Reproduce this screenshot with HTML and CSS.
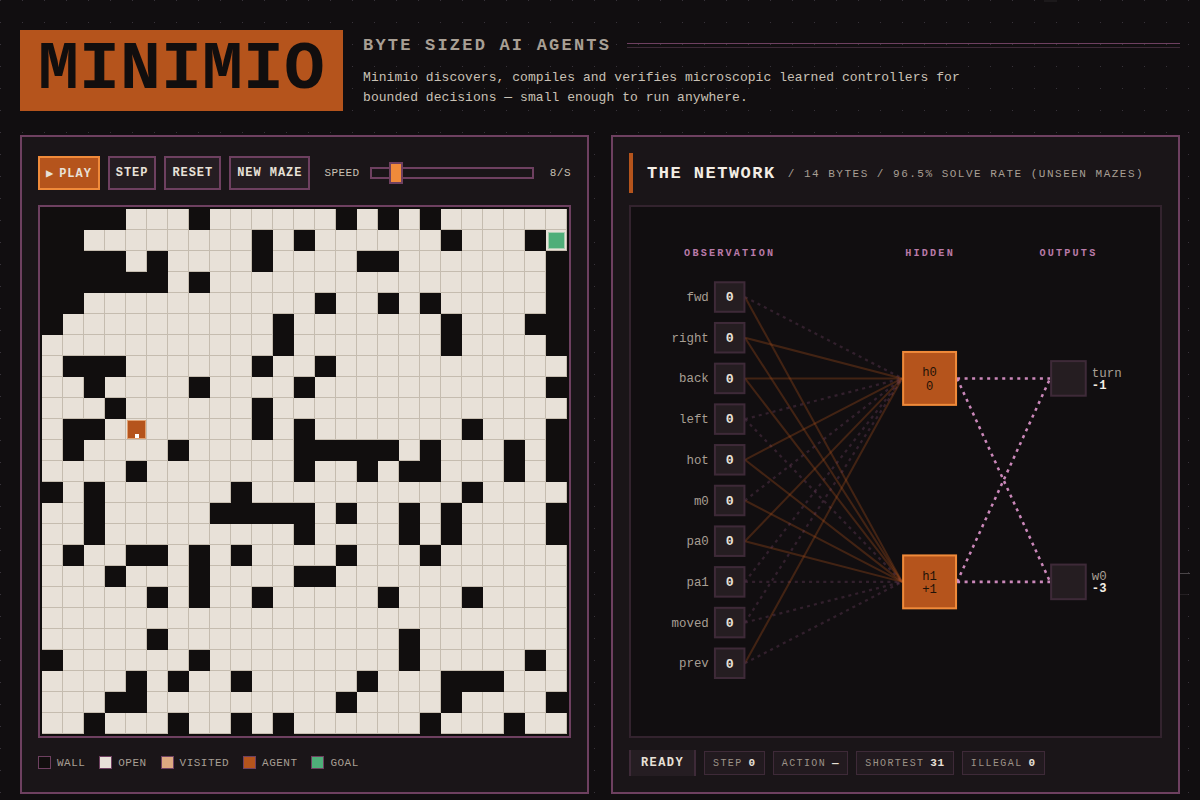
FILE: index.html
```html
<!DOCTYPE html>
<html lang="en">
<head>
    <meta charset="UTF-8">
    <meta name="viewport" content="width=device-width, initial-scale=1.0">
    <title>Minimio</title>
    <link rel="stylesheet" href="styles.css">
</head>
<body>

    <header class="masthead">
        <h1 class="logo">MINIMIO</h1>
        <div class="intro">
            <div class="tagline-row">
                <h2 class="tagline">BYTE SIZED AI AGENTS</h2>
                <div class="tagline-rule"></div>
            </div>
            <p class="blurb">Minimio discovers, compiles and verifies microscopic learned controllers for<br>bounded decisions — small enough to run anywhere.</p>
        </div>
    </header>

    <main class="panels">
        <!-- maze -->
        <section class="panel">
            <div class="controls">
                <button class="btn btn-play"><span class="play-icon">▶</span>PLAY</button>
                <button class="btn">STEP</button>
                <button class="btn">RESET</button>
                <button class="btn">NEW MAZE</button>
                <label class="speed-label" for="speed">SPEED</label>
                <input class="speed" id="speed" type="range" min="1" max="60" value="8">
                <span class="speed-value">8/S</span>
            </div>
            <div class="maze" id="maze"></div>
            <div class="legend">
                <span class="legend-item"><i class="swatch swatch-wall"></i>WALL</span>
                <span class="legend-item"><i class="swatch swatch-open"></i>OPEN</span>
                <span class="legend-item"><i class="swatch swatch-visited"></i>VISITED</span>
                <span class="legend-item"><i class="swatch swatch-agent"></i>AGENT</span>
                <span class="legend-item"><i class="swatch swatch-goal"></i>GOAL</span>
            </div>
        </section>

        <!-- network -->
        <section class="panel">
            <div class="net-head">
                <h2 class="net-title">THE NETWORK</h2>
                <span class="net-sub">/ 14 BYTES / 96.5% SOLVE RATE (UNSEEN MAZES)</span>
            </div>
            <div class="net-box">
                <svg class="net" id="net" viewBox="0 0 520 520"></svg>
            </div>
            <div class="status">
                <span class="ready">READY</span>
                <span class="chip">STEP <b>0</b></span>
                <span class="chip">ACTION <b>—</b></span>
                <span class="chip">SHORTEST <b>31</b></span>
                <span class="chip">ILLEGAL <b>0</b></span>
            </div>
        </section>
    </main>

    <div class="edge-mark edge-mark-a"></div>
    <div class="edge-mark edge-mark-b"></div>
    <div class="edge-mark edge-mark-c"></div>

    <script src="script.js"></script>
</body>
</html>
```

FILE: styles.css
```css
* {
    box-sizing: border-box;
}
body {
    margin: 0;
    padding: 30px 20px 0;
    height: 800px;
    overflow: hidden;
    font-family: "Liberation Mono", monospace;
    color: #e8e1d8;
    background-color: #110e10;
    background-image: radial-gradient(circle at 0.5px 0.5px, #38333a 0.8px, transparent 0.8px);
    background-size: 22px 22px;
}

/* header */
.masthead {
    display: flex;
    gap: 20px;
    height: 81px;
    margin-bottom: 24px;
}
.logo {
    margin: 0;
    padding: 0 18px;
    height: 81px;
    font-size: 68px;
    line-height: 79px;
    letter-spacing: 0.2px;
    font-weight: 700;
    color: #110e0e;
    background-color: #b5541c;
}
.intro {
    flex: 1;
}
.tagline-row {
    display: flex;
    align-items: center;
    gap: 16px;
    height: 30px;
}
.tagline {
    margin: 0;
    font-size: 17px;
    letter-spacing: 2.2px;
    font-weight: 700;
    color: #a89f94;
}
.tagline-rule {
    flex: 1;
    height: 5px;
    border-top: 1px solid #6e4060;
    border-bottom: 1px solid #3e2a38;
}
.blurb {
    margin: 8px 0 0;
    font-size: 13px;
    letter-spacing: 0.05px;
    line-height: 20px;
    color: #c9c1b5;
}

/* panels */
.panels {
    display: grid;
    grid-template-columns: 1fr 1fr;
    gap: 22px;
    height: 659px;
}
.panel {
    padding: 16px;
    background-color: #1a1518;
    border: 2px solid #6e4060;
}

/* controls */
.controls {
    display: flex;
    align-items: center;
    height: 40px;
    margin-bottom: 12px;
}
.btn {
    height: 34px;
    margin-right: 8px;
    padding: 0 6px;
    font-family: inherit;
    font-size: 12px;
    font-weight: 700;
    letter-spacing: 0.95px;
    color: #e8e1d8;
    background-color: #251d22;
    border: 2px solid #6e4060;
}
.btn-play {
    background-color: #b5541c;
    border-color: #f08a3a;
}
.play-icon {
    margin-right: 5px;
}
.speed-label {
    margin-left: 6px;
    margin-right: 10px;
    font-size: 11px;
    letter-spacing: 0.45px;
    color: #c9c1b5;
}
.speed {
    flex: 1;
    min-width: 0;
    height: 22px;
    margin: 0 16px 0 0;
    background: transparent;
    appearance: none;
    -webkit-appearance: none;
}
.speed::-webkit-slider-runnable-track {
    height: 12px;
    background-color: #1a1518;
    border: 2px solid #6e4060;
}
.speed::-webkit-slider-thumb {
    -webkit-appearance: none;
    width: 14px;
    height: 22px;
    margin-top: -7px;
    background-color: #f08a3a;
    border: 2px solid #6e4060;
}
.speed-value {
    font-size: 11px;
    letter-spacing: 0.5px;
    color: #c9c1b5;
}

/* maze */
.maze {
    display: grid;
    grid-template-columns: repeat(25, 21px);
    grid-auto-rows: 21px;
    width: 533px;
    height: 533px;
    padding: 2px;
    background-color: #110e0e;
    border: 2px solid #6e4060;
}
.cell {
    display: flex;
    background-color: #e8e1d8;
    border-right: 1px solid #c5bcaf;
    border-bottom: 1px solid #c5bcaf;
}
.wall {
    background-color: #110e0e;
    border-color: #110e0e;
}
.agent {
    flex: 1;
    display: flex;
    align-items: flex-end;
    justify-content: center;
    margin: 1px 0 0 1px;
    background-color: #b5541c;
    border: 1px solid #e0a070;
}
.agent-eye {
    width: 4px;
    height: 4px;
    background-color: #fff;
}
.goal {
    flex: 1;
    margin: 2px 1px 1px 2px;
    background-color: #4fae79;
    border: 1px solid #a9cfb2;
}

/* legend */
.legend {
    display: flex;
    gap: 14px;
    margin-top: 18px;
}
.legend-item {
    display: flex;
    align-items: center;
    gap: 6px;
    font-size: 11px;
    letter-spacing: 0.47px;
    color: #a89f94;
}
.swatch {
    width: 13px;
    height: 13px;
    border: 1px solid #6e4060;
}
.swatch-wall { background-color: #110e0e; }
.swatch-open { background-color: #e8e1d8; }
.swatch-visited { background-color: #dca981; }
.swatch-agent { background-color: #b5541c; }
.swatch-goal { background-color: #4fae79; }

/* network */
.net-head {
    display: flex;
    align-items: center;
    height: 40px;
    margin-bottom: 12px;
    padding-left: 14px;
    border-left: 4px solid #b5541c;
}
.net-title {
    margin: 0 12px 0 0;
    font-size: 17px;
    letter-spacing: 1.5px;
    font-weight: 700;
    color: #f3ede4;
}
.net-sub {
    font-size: 11px;
    letter-spacing: 1.5px;
    color: #a89f94;
    position: relative;
    top: 1px;
}
.net-box {
    width: 533px;
    height: 533px;
    background-color: #110e10;
    border: 2px solid #33232e;
}
.net {
    display: block;
    width: 529px;
    height: 529px;
}
.edge-on {
    stroke: #b5541c;
    stroke-width: 2;
    opacity: 0.3;
}
.edge-off {
    stroke: #6e4060;
    stroke-width: 2.2;
    stroke-dasharray: 3 4;
    opacity: 0.36;
}
.edge-out {
    stroke: #cb88ba;
    stroke-width: 2.5;
    stroke-dasharray: 3 4.4;
}
.col-label {
    font-size: 10px;
    font-weight: 700;
    letter-spacing: 2.15px;
    fill: #b97aa8;
    text-anchor: middle;
}
.node-label {
    font-size: 12.2px;
    fill: #a89f94;
}
.node-label-right {
    text-anchor: end;
}
.node-box {
    fill: #251d21;
    stroke: #3e2a38;
    stroke-width: 2;
}
.node-value {
    font-size: 13px;
    font-weight: 700;
    fill: #e8e1d8;
    text-anchor: middle;
}
.hidden-box {
    fill: #b5541c;
    stroke: #f08a3a;
    stroke-width: 2;
}
.hidden-text {
    font-size: 12px;
    fill: #1f1208;
    text-anchor: middle;
}
.out-value {
    font-size: 12px;
    font-weight: 700;
    fill: #f3ede4;
}

/* status */
.status {
    display: flex;
    align-items: center;
    gap: 8px;
    margin-top: 12px;
}
.ready {
    height: 26px;
    padding: 0 10px;
    font-size: 12px;
    font-weight: 700;
    letter-spacing: 1.4px;
    line-height: 26px;
    background-color: #251d22;
    border-left: 2px solid #3e2a38;
    border-right: 2px solid #3e2a38;
}
.chip {
    height: 24px;
    padding: 0 8px;
    font-size: 10px;
    letter-spacing: 1.4px;
    word-spacing: -1.5px;
    line-height: 22px;
    color: #9c9287;
    background-color: #221a1f;
    border: 1px solid #3e2a38;
}
.chip b {
    font-size: 11px;
    letter-spacing: 0.6px;
    color: #e8e1d8;
}

/* odd marks at the window edge */
.edge-mark {
    position: absolute;
    height: 1px;
}
.edge-mark-a {
    left: 1180px;
    top: 573px;
    width: 10px;
    background-color: #4a4548;
}
.edge-mark-b {
    left: 1180px;
    top: 594px;
    width: 8px;
    background-color: #241f22;
}
.edge-mark-c {
    left: 1044px;
    top: 0;
    width: 13px;
    height: 2px;
    background-color: #1c191b;
}
```

FILE: script.js
```js
// # wall, . open, A agent, G goal
const MAZE = [
    '####...#......#.#.#......',
    '##........#.#......#...#G',
    '####.#....#....##.......#',
    '######.#................#',
    '##...........#..#.#.....#',
    '#..........#.......#...##',
    '...........#.......#....#',
    '.###......#..#...........',
    '..#....#....#...........#',
    '...#......#..............',
    '.##.A.....#.#.......#...#',
    '.#....#.....#####.#...#.#',
    '....#.......#..#.##...#.#',
    '#.#......#..........#....',
    '..#.....#####.#..#.#....#',
    '..#.........#....#.#....#',
    '.#..##.#.#....#...#......',
    '...#...#....##...........',
    '.....#.#..#.....#...#....',
    '.........................',
    '.....#...........#.......',
    '#......#.........#.....#.',
    '....#.#..#.....#...###...',
    '...##.........#....#....#',
    '..#...#..#.#......#...#..'
];

const mazeEl = document.getElementById('maze');
MAZE.forEach(row => {
    row.split('').forEach(ch => {
        const cell = document.createElement('div');
        cell.className = ch === '#' ? 'cell wall' : 'cell';
        if (ch === 'A') {
            cell.innerHTML = '<div class="agent"><div class="agent-eye"></div></div>';
        }
        if (ch === 'G') {
            cell.innerHTML = '<div class="goal"></div>';
        }
        mazeEl.appendChild(cell);
    });
});

// network drawing
const TOP = 88.5;
const PITCH = 40;
const H0 = 168.5;
const H1 = 368.5;
const INPUTS = [
    { name: 'fwd', h0: false, h1: true },
    { name: 'right', h0: true, h1: true },
    { name: 'back', h0: true, h1: true },
    { name: 'left', h0: false, h1: false },
    { name: 'hot', h0: true, h1: true },
    { name: 'm0', h0: false, h1: true },
    { name: 'pa0', h0: true, h1: true },
    { name: 'pa1', h0: false, h1: false },
    { name: 'moved', h0: false, h1: false },
    { name: 'prev', h0: true, h1: false }
];

let lines = '';
let nodes = '';

INPUTS.forEach((input, i) => {
    const y = TOP + PITCH * i;
    lines += `<line class="${input.h0 ? 'edge-on' : 'edge-off'}" x1="112" y1="${y}" x2="266.5" y2="${H0}"/>`;
    lines += `<line class="${input.h1 ? 'edge-on' : 'edge-off'}" x1="112" y1="${y}" x2="266.5" y2="${H1}"/>`;
    nodes += `<text class="node-label node-label-right" x="76.5" y="${y + 4}">${input.name}</text>`;
    nodes += `<rect class="node-box" x="82.5" y="${y - 14.5}" width="29" height="29"/>`;
    nodes += `<text class="node-value" x="97" y="${y + 4.2}">0</text>`;
});

[[H0, H0], [H0, H1], [H1, H0], [H1, H1]].forEach(pair => {
    lines += `<line class="edge-out" x1="320.5" y1="${pair[0]}" x2="412" y2="${pair[1]}"/>`;
});

[[H0, 'h0', '0'], [H1, 'h1', '+1']].forEach(h => {
    nodes += `<rect class="hidden-box" x="267.5" y="${h[0] - 26}" width="52" height="52"/>`;
    nodes += `<text class="hidden-text" x="293.5" y="${h[0] - 2}">${h[1]}</text>`;
    nodes += `<text class="hidden-text" x="293.5" y="${h[0] + 11.4}">${h[2]}</text>`;
});

[[H0, 'turn', '-1'], [H1, 'w0', '-3']].forEach(o => {
    nodes += `<rect class="node-box" x="413" y="${o[0] - 17}" width="34" height="34"/>`;
    nodes += `<text class="node-label" x="453" y="${o[0] - 1.6}">${o[1]}</text>`;
    nodes += `<text class="out-value" x="453" y="${o[0] + 10.2}">${o[2]}</text>`;
});

const heads = '<text class="col-label" x="97" y="48">OBSERVATION</text>'
    + '<text class="col-label" x="294" y="48">HIDDEN</text>'
    + '<text class="col-label" x="430" y="48">OUTPUTS</text>';

document.getElementById('net').innerHTML = heads + lines + nodes;
```
